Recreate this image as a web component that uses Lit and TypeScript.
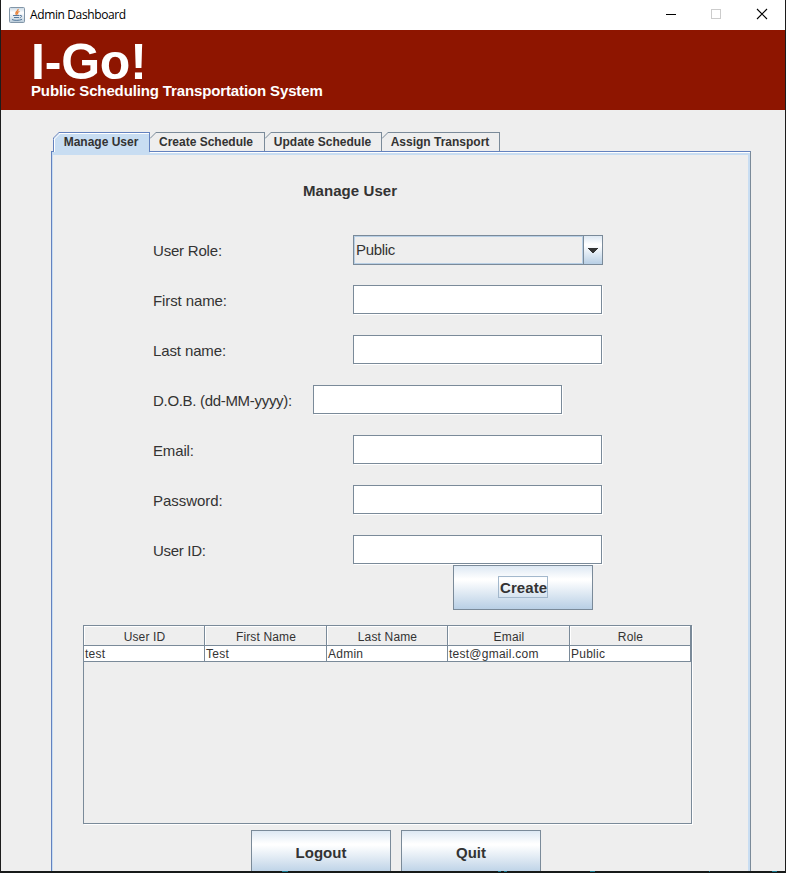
import { LitElement, html, svg, css } from "lit";
import { customElement, property } from "lit/decorators.js";
import { classMap } from "lit/directives/class-map.js";
import { styleMap } from "lit/directives/style-map.js";

@customElement("metal-tab")
class MetalTab extends LitElement {
  @property() label = "";
  @property({ type: Boolean, reflect: true }) selected = false;
  static styles = css`
    :host { display: block; height: 20px; flex: none; }
    .tab { position: relative; box-sizing: border-box; height: 19px; border-right: 1px solid #7a8a99; text-align: center;
      font: bold 12px/20px "Liberation Sans", sans-serif; color: #333; white-space: nowrap; padding-right: var(--tab-inset, 1px);
      background: linear-gradient(#7a8a99, #7a8a99) 6px 0 / 100% 1px no-repeat; }
    .on { height: 23px; border-right: 0; padding-right: 1px; z-index: 1;
      background: linear-gradient(#6382bf, #6382bf) 6px 0 / 100% 1px no-repeat,
        linear-gradient(#fff, #fff) 6px 1px / 90px 1px no-repeat,
        linear-gradient(#6382bf, #6382bf) 100% 0 / 1px 20px no-repeat,
        linear-gradient(#6382bf, #6382bf) 0 6px / 1px 14px no-repeat,
        linear-gradient(#fff, #fff) 1px 7px / 1px 13px no-repeat,
        linear-gradient(135deg, #eee 5px, #c8ddf2 5px); }
    svg { position: absolute; left: 0; top: 0; }
  `;
  render() {
    return html`<div class=${classMap({ tab: true, on: this.selected })}>
      <svg width="7" height="8" viewBox="0 0 7 8" fill="none">
        <path d="M0 6.5L6.5 0" stroke=${this.selected ? "#6382bf" : "#7a8a99"} />
        ${this.selected ? svg`<path d="M1 7.5L7 1.5" stroke="#fff"/>` : ""}
      </svg>${this.label}</div>`;
  }
}

@customElement("app-root")
class AppRoot extends LitElement {
  static styles = css`
    :host { display: block; }
    * { box-sizing: border-box; }
    .window { width: 786px; height: 873px; overflow: hidden; display: flex; flex-direction: column;
      background: #eee; border: solid #1c1c1c; border-width: 0 1px; color: #333;
      font: 15px "Liberation Sans", Arial, sans-serif; white-space: nowrap; }
    .titlebar { height: 30px; flex: none; background: #fff; display: flex; align-items: center; padding-left: 8px; }
    .titlebar .name { font: 12px/30px "Open Sans", sans-serif; color: #000; margin-left: 5px; flex: 1; letter-spacing: -0.38px; }
    .titlebar svg { display: block; flex: none; }
    .banner { height: 80px; flex: none; background: #8e1500; color: #fff; padding: 7px 0 0 30px; font-weight: bold; }
    .brand { font-size: 50px; line-height: 50px; height: 45px; letter-spacing: -0.2px; }
    .sub { font-size: 15px; line-height: 18px; letter-spacing: -0.13px; }
    .body { flex: 1; min-height: 0; overflow: hidden; padding: 22px 0 0 50px; }
    .tabs { display: flex; padding-left: 2px; height: 19px; }
    .t1 { width: 97px; } .t2 { width: 115px; --tab-inset: 2px; } .t3 { width: 117px; } .t4 { width: 118px; }
    .pane { width: 700px; height: 740px; border: 1px solid #7a8a99; border-left-color: #6382bf; border-top-color: #6382bf;
      box-shadow: inset 1px 0 #c8ddf2, inset 0 1px #fff, inset 0 3px #c8ddf2, inset -2px 0 #c8ddf2; padding: 29px 0 0 31px; }
    h1 { margin: 0 0 0 220px; font-size: 15px; line-height: 20px; height: 54px; letter-spacing: 0.07px; }
    .row { display: grid; grid-template-columns: 200px 250px; height: 50px; margin-left: 70px; }
    .row.wide { grid-template-columns: 160px 250px; }
    .row label { line-height: 31px; }
    .field { width: 249px; height: 29px; background: #fff; border: 1px solid #7a8a99; box-shadow: 1px 1px #fff; }
    .combo { width: 250px; height: 30px; border: 1px solid #7a8a99; display: flex; }
    .value { flex: 1; border: 1px solid #b8cfe5; line-height: 26px; padding-left: 1px; letter-spacing: -0.3px; }
    .drop { width: 20px; flex: none; border-left: 1px solid #7a8a99; display: grid; place-items: center; padding-top: 1px; }
    .combo .drop { width: 19px; }
    .drop svg { display: block; }
    .drop, .btn { background: linear-gradient(#dde8f3 0%, #fff 30%, #fff 33%, #b8cfe5 100%); }
    .btn { width: 140px; height: 45px; border: 1px solid #7a8a99; display: grid; place-items: center; font-weight: bold; font-size: 15px; }
    .create { margin: -20px 0 15px 370px; padding-bottom: 1px; letter-spacing: 0.1px; }
    .focus { border: 1px solid #a3b8cc; width: 50px; height: 22px; line-height: 20px; padding: 1px 0 0 1px; display: grid; place-items: center; }
    .table { width: 609px; height: 199px; border: 1px solid #7a8a99; box-shadow: 1px 1px #fff; font-size: 12px; letter-spacing: 0.25px; }
    .cells { display: grid; grid-template-columns: 121px 122px 121px 122px 121px; }
    .th { height: 20px; border: solid #7a8a99; border-width: 0 1px 1px 0; box-shadow: inset 1px 1px #fff; text-align: center; line-height: 22px; letter-spacing: 0.15px; padding-left: 1px; }
    .td { height: 16px; background: #fff; border: solid #7a8a99; border-width: 0 1px 1px 0; line-height: 16px; padding-left: 1px; }
    .actions { display: flex; gap: 10px; margin: 6px 0 0 168px; }
    .desk { height: 2px; flex: none; background: #171a19; margin: 0 -1px; }
    .desk svg { display: block; }
  `;

  private fields: [string, number][] = [
    ["First name:", -0.1], ["Last name:", -0.12], ["D.O.B. (dd-MM-yyyy):", -0.31],
    ["Email:", -0.15], ["Password:", -0.05], ["User ID:", -0.3],
  ];
  private heads = ["User ID", "First Name", "Last Name", "Email", "Role"];
  private user = ["test", "Test", "Admin", "test@gmail.com", "Public"];

  private label(text: string, tracking: number) {
    return html`<label style=${styleMap({ letterSpacing: `${tracking}px` })}>${text}</label>`;
  }

  render() {
    return html`<div class="window">
      <div class="titlebar">
        <svg width="16" height="16" viewBox="0 0 16 16" fill="none">
          <defs><linearGradient id="g" x1="0" y1="0" x2="0" y2="1"><stop stop-color="#c9d8e4"/><stop offset=".35" stop-color="#fff"/><stop offset="1" stop-color="#b9cbd9"/></linearGradient></defs>
          <rect x=".5" y=".5" width="15" height="15" rx="1" fill="url(#g)" stroke="#8296a8"/>
          <path d="M9 2C10 4.500 5 4.500 7.500 8M10.500 4.500C8 5.500 8 6 9 7.500" stroke="#e8833a" stroke-width="1.300"/>
          <path d="M4 8.500H10.500M5 10.500H10M11 8.500C13.500 8 13 10 10.800 10.800M3 12.500C5 13.700 10.500 13.700 13 12.300" stroke="#56799c"/>
        </svg>
        <span class="name">Admin Dashboard</span>
        <svg width="120" height="30" viewBox="0 0 120 30" fill="none" shape-rendering="crispEdges">
          <path d="M1 14.500H11" stroke="#000"/><rect x="46.500" y="9.500" width="9" height="9" stroke="#ccc"/>
          <path d="M92 9L102 19M102 9L92 19" stroke="#000" stroke-width="1.100" shape-rendering="auto"/>
        </svg>
      </div>
      <div class="banner"><div class="brand">I-Go!</div><div class="sub">Public Scheduling Transportation System</div></div>
      <div class="body">
        <div class="tabs">
          <metal-tab class="t1" label="Manage User" selected></metal-tab>
          <metal-tab class="t2" label="Create Schedule"></metal-tab>
          <metal-tab class="t3" label="Update Schedule"></metal-tab>
          <metal-tab class="t4" label="Assign Transport"></metal-tab>
        </div>
        <div class="pane">
          <h1>Manage User</h1>
          <div class="row">${this.label("User Role:", -0.2)}
            <div class="combo"><div class="value">Public</div><div class="drop">
              <svg width="10" height="5" viewBox="0 0 10 5" shape-rendering="crispEdges"><path d="M0 0H10V1H9V2H8V3H7V4H6V5H4V4H3V3H2V2H1V1H0Z" fill="#333"/></svg></div></div>
          </div>
          ${this.fields.map(([text, tracking]) => html`<div class=${classMap({ row: true, wide: text.startsWith("D.O.B") })}>${this.label(text, tracking)}<div class="field"></div></div>`)}
          <div class="btn create"><span class="focus">Create</span></div>
          <div class="table">
            <div class="cells">${this.heads.map((h) => html`<div class="th">${h}</div>`)}${this.user.map((c) => html`<div class="td">${c}</div>`)}</div>
          </div>
          <div class="actions"><div class="btn">Logout</div><div class="btn">Quit</div></div>
        </div>
      </div>
      <div class="desk"><svg width="786" height="2"><path d="M282 .5H288M498 .5H501M504 .5H507M590 .5H595M709 .5H710M772 .5H777" stroke="#167a91"/></svg></div>
    </div>`;
  }
}
